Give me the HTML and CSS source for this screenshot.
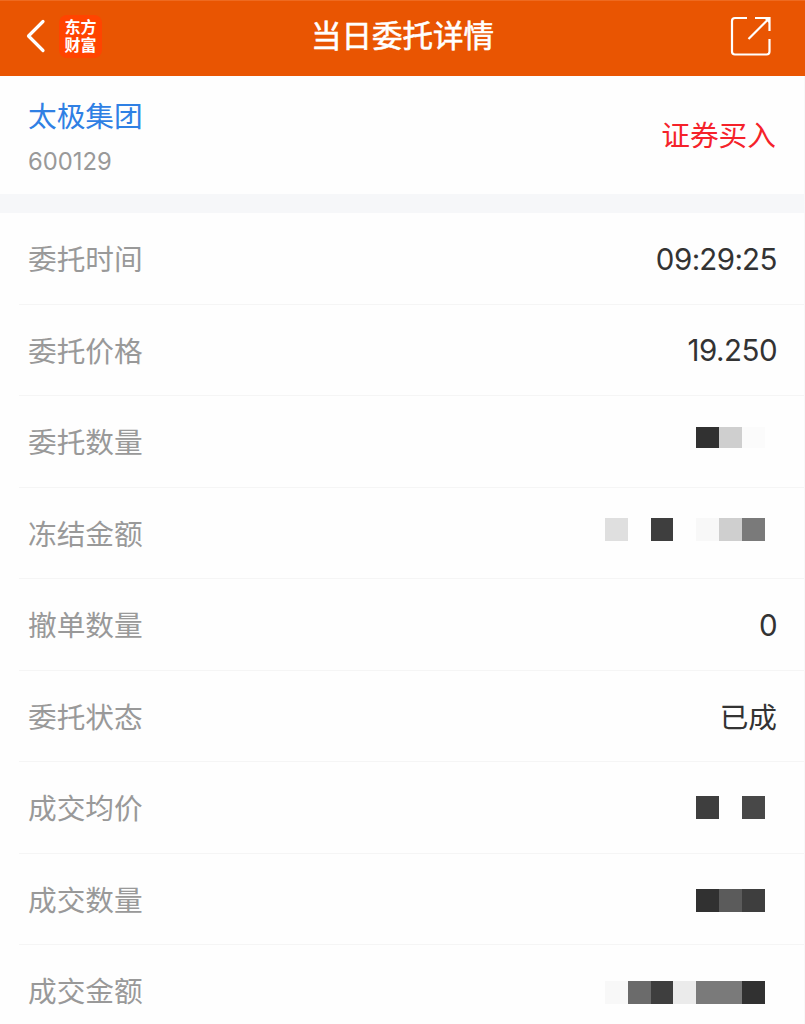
FILE: index.html
```html
<!DOCTYPE html>
<html lang="zh-CN">
	<head>
		<meta charset="utf-8">
		<title>当日委托详情</title>
		<link rel="stylesheet" href="styles.css">
	</head>
	<body>
		<header class="topbar">
			<div class="left">
				<svg class="back" width="20" height="34" viewBox="0 0 20 34">
					<path d="M17 2.5L2.5 17L17 31.5"/>
				</svg>
				<div class="logo"><span>东方</span><span>财富</span></div>
			</div>
			<h1>当日委托详情</h1>
			<svg class="share" width="42" height="42" viewBox="0 0 42 42">
				<path d="M17 3H5Q2 3 2 6V36.500Q2 39.500 5 39.500H36.500Q39.500 39.500 39.500 36.500V24M25 3H39.500V16M39 3.500L18.500 24"/>
				<path class="tip" d="M34 3H39.500V8.500Z"/>
			</svg>
		</header>
		<section class="stock">
			<div class="info">
				<div class="name">太极集团</div>
				<div class="code">600129</div>
			</div>
			<div class="side">证券买入</div>
		</section>
		<ul class="details">
			<li><span class="label">委托时间</span><span class="value time">09<b>:</b>29<b>:</b>25</span></li>
			<li><span class="label">委托价格</span><span class="value">19.250</span></li>
			<li>
				<span class="label">委托数量</span>
				<span class="mosaic up short"><i class="g1"></i><i class="g6"></i><i class="g10"></i></span>
			</li>
			<li>
				<span class="label">冻结金额</span>
				<span class="mosaic up"><i class="g7"></i><i></i><i class="g2"></i><i></i><i class="g9"></i><i class="g6"></i><i class="g5"></i></span>
			</li>
			<li><span class="label">撤单数量</span><span class="value">0</span></li>
			<li><span class="label">委托状态</span><span class="value cn">已成</span></li>
			<li>
				<span class="label">成交均价</span>
				<span class="mosaic"><i class="g2"></i><i></i><i class="g3"></i></span>
			</li>
			<li>
				<span class="label">成交数量</span>
				<span class="mosaic down"><i class="g1"></i><i class="g4"></i><i class="g2"></i></span>
			</li>
			<li>
				<span class="label">成交金额</span>
				<span class="mosaic down2"><i class="g9"></i><i class="g45"></i><i class="g2"></i><i class="g8"></i><i class="g5"></i><i class="g5"></i><i class="g1"></i></span>
			</li>
		</ul>
	</body>
</html>
```
FILE: styles.css
```css
* {
	box-sizing: border-box;
}
body {
	margin: 0;
	height: 1024px;
	overflow: hidden;
	background-color: #fefefe;
	color: #333;
	font-family: Inter, "Noto Sans CJK SC", sans-serif;
}
.topbar {
	display: grid;
	grid-template-columns: 1fr auto 1fr;
	align-items: center;
	height: 76px;
	padding: 0 33px 5px 26px;
	background-color: #e95502;
	border-top: 1px solid #ee6a20;
}
.left {
	display: flex;
	align-items: center;
	gap: 13px;
}
svg {
	fill: none;
	stroke: #fff;
}
.back {
	stroke-width: 3.2;
	stroke-linecap: round;
	stroke-linejoin: round;
}
.share {
	justify-self: end;
	stroke-width: 2.2;
}
.tip {
	fill: #fff;
	stroke: none;
}
.logo {
	display: flex;
	flex-direction: column;
	align-items: center;
	justify-content: center;
	width: 43px;
	height: 43px;
	border-radius: 8px;
	background-color: #ff4400;
	color: #fff;
	font-size: 16px;
	font-weight: 700;
	line-height: 18px;
}
h1 {
	margin: 0 0 0 7px;
	color: #fff;
	font-size: 30.5px;
	font-weight: 400;
	line-height: 40px;
	-webkit-text-stroke: 0.6px #fff;
}
.stock {
	display: flex;
	align-items: center;
	justify-content: space-between;
	height: 137px;
	padding: 0 28px;
	border-right: 1px solid #f8f8f8;
	border-bottom: 19px solid #f6f7f9;
}
.info {
	margin-top: 9px;
}
.name {
	color: #2f80e4;
	font-size: 28.7px;
	line-height: 44px;
}
.code {
	color: #999;
	font-size: 23.8px;
	line-height: 45px;
}
.side {
	margin-bottom: 4px;
	color: #f5222a;
	font-size: 28.7px;
}
.details {
	margin: 0 0 0 19px;
	padding: 0;
	list-style: none;
	border-right: 1px solid #f8f8f8;
}
.details li {
	display: flex;
	align-items: center;
	justify-content: space-between;
	height: 91.5px;
	padding: 0 27px 0 9px;
	border-bottom: 1px solid #f5f5f5;
}
.label {
	margin-top: -1px;
	color: #999;
	font-size: 28.7px;
}
.value {
	margin-top: 1px;
	font-size: 29.5px;
	letter-spacing: -0.5px;
}
.time b {
	font-weight: 400;
	letter-spacing: -1px;
}
.cn {
	margin-top: -1px;
	font-size: 28.7px;
	letter-spacing: 0;
}
.mosaic {
	display: flex;
	height: 23px;
	margin-right: 12px;
}
.mosaic i {
	width: 22.9px;
}
.up {
	margin-top: -7px;
}
.short {
	height: 21px;
}
.down {
	margin-top: 3px;
}
.down2 {
	margin-top: 5px;
}
.g1 { background-color: #313131; }
.g2 { background-color: #3e3e3e; }
.g3 { background-color: #484848; }
.g4 { background-color: #5b5b5b; }
.g45 { background-color: #6b6b6b; }
.g5 { background-color: #7a7a7a; }
.g6 { background-color: #cfcfcf; }
.g7 { background-color: #dfdfdf; }
.g8 { background-color: #ebebeb; }
.g9 { background-color: #f8f8f8; }
.g10 { background-color: #fbfbfb; }
```
